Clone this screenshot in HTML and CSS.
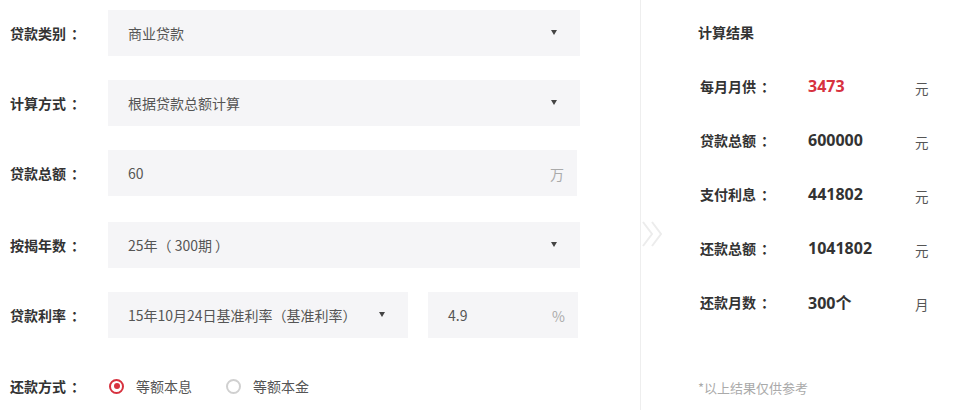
FILE: index.html
```html
<!DOCTYPE html>
<html lang="zh">
<head>
<meta charset="utf-8">
<link rel="stylesheet" href="styles.css">
</head>
<body>
<div class="page">
  <div class="form">
    <div class="row r1">
      <div class="label">贷款类别<span class="colon">：</span></div>
      <div class="field select w472"><span>商业贷款</span><i class="arrow"></i></div>
    </div>
    <div class="row">
      <div class="label">计算方式<span class="colon">：</span></div>
      <div class="field select w472"><span>根据贷款总额计算</span><i class="arrow"></i></div>
    </div>
    <div class="row">
      <div class="label">贷款总额<span class="colon">：</span></div>
      <div class="field w469"><span>60</span><em class="unit">万</em></div>
    </div>
    <div class="row r4">
      <div class="label">按揭年数<span class="colon">：</span></div>
      <div class="field select w472"><span>25年（&nbsp;300期&nbsp;）</span><i class="arrow"></i></div>
    </div>
    <div class="row">
      <div class="label">贷款利率<span class="colon">：</span></div>
      <div class="pair">
        <div class="field select w300"><span>15年10月24日基准利率（基准利率）</span><i class="arrow"></i></div>
        <div class="field w150"><span>4.9</span><em class="unit">%</em></div>
      </div>
    </div>
    <div class="row radio-row">
      <div class="label">还款方式<span class="colon">：</span></div>
      <div class="radios">
        <label class="radio on"><i class="dot"></i>等额本息</label>
        <label class="radio"><i class="dot"></i>等额本金</label>
      </div>
    </div>
  </div>
  <div class="result">
    <svg class="chev" width="22" height="26" viewBox="0 0 22 26"><path d="M1 1 L10 13 L1 25 M10 1 L19 13 L10 25" fill="none" stroke="#ececec" stroke-width="2"/></svg>
    <div class="title">计算结果</div>
    <div class="rrow"><span class="rl">每月月供<span class="colon">：</span></span><span class="rv red">3473</span><span class="ru">元</span></div>
    <div class="rrow"><span class="rl">贷款总额<span class="colon">：</span></span><span class="rv">600000</span><span class="ru">元</span></div>
    <div class="rrow"><span class="rl">支付利息<span class="colon">：</span></span><span class="rv">441802</span><span class="ru">元</span></div>
    <div class="rrow"><span class="rl">还款总额<span class="colon">：</span></span><span class="rv">1041802</span><span class="ru">元</span></div>
    <div class="rrow"><span class="rl">还款月数<span class="colon">：</span></span><span class="rv">300个</span><span class="ru">月</span></div>
    <div class="note">*以上结果仅供参考</div>
  </div>
</div>
</body>
</html>
```
FILE: styles.css
```css
* { box-sizing: border-box; }
html, body { margin: 0; padding: 0; background: #fff; }
body {
  font-family: "Noto Sans CJK SC", "Noto Sans", sans-serif;
  color: #333;
  width: 962px;
  height: 410px;
  overflow: hidden;
}
.page { display: flex; height: 410px; }
.form {
  width: 641px;
  border-right: 1px solid #eeeeee;
  padding: 10px 0 0 10px;
  display: flex;
  flex-direction: column;
  gap: 24px;
}
.row { display: flex; align-items: center; height: 46px; }
.r4 { margin-top: 2px; }
.radio-row { margin-top: 1px; }
.label {
  width: 98px;
  font-size: 14px;
  font-weight: 700;
  color: #333;
}
.colon { display: inline-block; padding-left: 5px; }
.field {
  position: relative;
  height: 46px;
  background: #f5f5f7;
  display: flex;
  align-items: center;
  padding-left: 20px;
  font-size: 14px;
  color: #555;
}
.w472 { width: 472px; }
.w469 { width: 469px; }
.w300 { width: 300px; }
.w150 { width: 150px; }
.pair { display: flex; gap: 20px; }
.arrow {
  position: absolute;
  right: 23px;
  top: 20px;
  width: 0; height: 0;
  border-left: 3.5px solid transparent;
  border-right: 3.5px solid transparent;
  border-top: 5px solid #444;
}
.unit {
  position: absolute;
  right: 13px;
  top: 14px;
  font-style: normal;
  color: #aaa;
  font-size: 14px;
}
.radios { display: flex; align-items: center; }
.radio {
  display: flex;
  align-items: center;
  font-size: 14px;
  color: #555;
  width: 116px;
  margin-left: 1px;
}
.dot {
  width: 15px; height: 15px;
  border-radius: 50%;
  border: 2px solid #d0d0d0;
  margin-right: 12px;
  position: relative;
}
.radio.on .dot { border-color: #d7323f; }
.radio.on .dot::after {
  content: "";
  position: absolute;
  left: 2.5px; top: 2.5px;
  width: 6px; height: 6px;
  border-radius: 50%;
  background: #d7323f;
}
.result {
  position: relative;
  flex: 1;
  padding: 20px 0 0 57px;
}
.chev { position: absolute; left: 1px; top: 221px; }
.title { font-size: 14px; font-weight: 700; height: 24px; line-height: 24px; color: #333; }
.rrow {
  display: flex;
  align-items: center;
  height: 24px;
  margin-top: 30px;
}
.rl { width: 110px; font-size: 14px; font-weight: 700; padding-left: 2px; color: #333; }
.rv { width: 107px; font-size: 16px; font-weight: 700; color: #333; font-family: "Open Sans", "Noto Sans CJK SC", sans-serif; }
.rv.red { color: #d7323f; }
.ru { font-size: 13.5px; color: #555; padding-top: 3px; }
.note { margin-top: 64px; font-size: 13px; color: #aaa; }
```
